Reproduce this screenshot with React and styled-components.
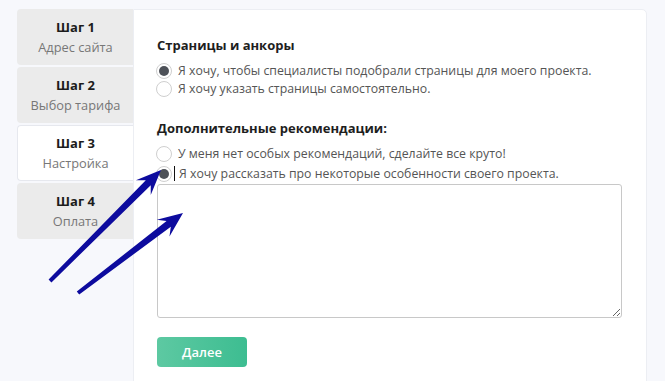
import React, { useState } from "react";
import styled, { createGlobalStyle } from "styled-components";

const Global = createGlobalStyle`
  body {
    margin: 0;
    background: #f7f8fc;
    font-family: "Open Sans", "Liberation Sans", sans-serif;
  }
`;

const Page = styled.div`
  position: relative;
  display: flex;
  align-items: flex-start;
  padding: 9px 0 0 17px;
  height: 381px;
  box-sizing: border-box;
  overflow: hidden;
`;

const Steps = styled.div`
  display: flex;
  flex-direction: column;
  gap: 2px;
  width: 116px;
  flex-shrink: 0;
`;

const Step = styled.div`
  height: 56px;
  box-sizing: border-box;
  display: flex;
  flex-direction: column;
  align-items: center;
  justify-content: center;
  gap: 2px;
  border-radius: 4px 0 0 4px;
  background: ${(p) => (p.$active ? "#ffffff" : "#ebebeb")};
  border: 1px solid ${(p) => (p.$active ? "#e6e8ee" : "transparent")};
  border-right: none;
`;

const StepTitle = styled.div`
  font-size: 13px;
  font-weight: 700;
  color: #1c1c1c;
`;

const StepName = styled.div`
  font-size: 12.8px;
  color: #777;
`;

const Panel = styled.div`
  width: 514px;
  height: 380px;
  box-sizing: border-box;
  background: #fff;
  border: 1px solid #eceef3;
  border-radius: 0 5px 0 0;
  padding: 26px 0 0 23px;
`;

const Heading = styled.div`
  font-size: 13px;
  font-weight: 700;
  color: #1e1e1e;
  margin-bottom: ${(p) => p.$mb || 8}px;
`;

const Group = styled.div`
  display: flex;
  flex-direction: column;
  gap: ${(p) => p.$gap}px;
  margin-bottom: ${(p) => p.$mb || 0}px;
`;

const Row = styled.label`
  display: flex;
  align-items: center;
  gap: 7px;
  font-size: 12.3px;
  color: #555;
  height: 17px;
  cursor: pointer;
`;

const Dot = styled.span`
  width: 16px;
  height: 16px;
  box-sizing: border-box;
  border-radius: 50%;
  border: 1px solid #cfcfcf;
  background: #fff;
  display: flex;
  align-items: center;
  justify-content: center;
  flex-shrink: 0;
  margin-left: -1px;
  margin-right: -1px;
  &::after {
    content: "";
    width: 10px;
    height: 10px;
    border-radius: 50%;
    background: ${(p) => (p.$on ? "#4d5158" : "transparent")};
  }
`;

const Caret = styled.span`
  width: 1px;
  height: 15px;
  background: #111;
  margin: 0 -3px 0 -4px;
`;

const TextBox = styled.textarea`
  display: block;
  width: 465px;
  height: 134px;
  box-sizing: border-box;
  border: 1px solid #c8c8c8;
  border-radius: 3px;
  margin: 2px 0 19px;
  font-family: inherit;
  resize: both;
  outline: none;
`;

const Button = styled.button`
  width: 90px;
  height: 30px;
  border: none;
  border-radius: 4px;
  background: linear-gradient(90deg, #5dc9a2, #3dbd91);
  color: #fff;
  font-family: inherit;
  font-size: 13px;
  font-weight: 600;
  cursor: pointer;
`;

const Arrows = styled.svg`
  position: absolute;
  left: 0;
  top: 0;
  pointer-events: none;
`;

const steps = [
  { title: "Шаг 1", name: "Адрес сайта" },
  { title: "Шаг 2", name: "Выбор тарифа" },
  { title: "Шаг 3", name: "Настройка", active: true },
  { title: "Шаг 4", name: "Оплата" },
];

const Arrow = ({ x1, y1, x2, y2 }) => {
  const dx = x2 - x1;
  const dy = y2 - y1;
  const len = Math.hypot(dx, dy);
  const ux = dx / len;
  const uy = dy / len;
  const nx = -uy;
  const ny = ux;
  const hl = 25;
  const hw = 10.5;
  const bx = x2 - ux * hl;
  const by = y2 - uy * hl;
  const nb = x2 - ux * (hl - 7);
  const nby = y2 - uy * (hl - 7);
  const pts = [
    [x1 + nx * 2, y1 + ny * 2],
    [nb + nx * 3.5, nby + ny * 3.5],
    [bx + nx * hw, by + ny * hw],
    [x2, y2],
    [bx - nx * hw, by - ny * hw],
    [nb - nx * 3.5, nby - ny * 3.5],
    [x1 - nx * 2, y1 - ny * 2],
  ];
  return <polygon points={pts.map((p) => p.join(",")).join(" ")} fill="#0d0b9e" />;
};

const App = () => {
  const [pages, setPages] = useState(0);
  const [rec, setRec] = useState(1);
  return (
    <Page>
      <Global />
      <Steps>
        {steps.map((s) => (
          <Step key={s.title} $active={s.active}>
            <StepTitle>{s.title}</StepTitle>
            <StepName>{s.name}</StepName>
          </Step>
        ))}
      </Steps>
      <Panel>
        <Heading $mb={8}>Страницы и анкоры</Heading>
        <Group $gap={1} $mb={22}>
          <Row onClick={() => setPages(0)}>
            <Dot $on={pages === 0} />
            Я хочу, чтобы специалисты подобрали страницы для моего проекта.
          </Row>
          <Row onClick={() => setPages(1)}>
            <Dot $on={pages === 1} />
            Я хочу указать страницы самостоятельно.
          </Row>
        </Group>
        <Heading $mb={8}>Дополнительные рекомендации:</Heading>
        <Group $gap={3}>
          <Row onClick={() => setRec(0)}>
            <Dot $on={rec === 0} />
            У меня нет особых рекомендаций, сделайте все круто!
          </Row>
          <Row onClick={() => setRec(1)}>
            <Dot $on={rec === 1} />
            <Caret />
            Я хочу рассказать про некоторые особенности своего проекта.
          </Row>
        </Group>
        <TextBox />
        <Button>Далее</Button>
      </Panel>
      <Arrows width="665" height="381">
        <Arrow x1={50} y1={281} x2={161} y2={170} />
        <Arrow x1={78} y1={293} x2={183} y2={213} />
      </Arrows>
    </Page>
  );
};

export default App;
